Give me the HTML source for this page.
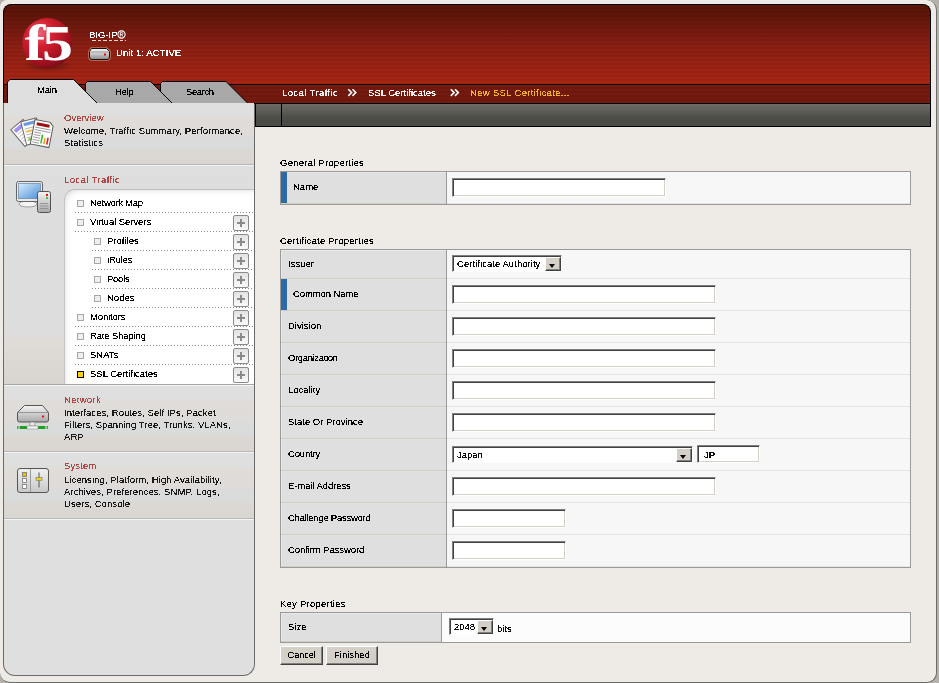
<!DOCTYPE html>
<html><head><meta charset="utf-8">
<style>
*{margin:0;padding:0;box-sizing:border-box}
html,body{width:939px;height:683px;overflow:hidden;background:#b4b0aa}
body{font-family:"Liberation Sans",sans-serif;font-size:9.5px;color:#111;position:relative}
.a{position:absolute}
.t{position:absolute;white-space:nowrap;line-height:12px;font-size:9.5px}
#frame{left:0;top:0;width:937px;height:683px;background:#eeebe6;border-right:1px solid #6a6a6a;border-bottom:1px solid #6a6a6a;border-radius:7px 10px 10px 10px}
#hdr{left:3px;top:4px;width:928px;height:81px;border:1px solid #000;border-bottom:none;border-radius:8px 8px 0 0;
 background:repeating-linear-gradient(to bottom,rgba(0,0,0,0) 0,rgba(0,0,0,0) 2px,rgba(0,0,0,.07) 2px,rgba(0,0,0,.07) 4px),linear-gradient(to bottom,#5e1609 1.2%,#5c1409 7.4%,#6a180d 19.8%,#761b10 32.1%,#851d12 44.4%,#8e2013 54.3%,#922013 63.0%,#9c2214 75.3%,#a42414 87.7%,#a82515 98.8%)}
#band{left:3px;top:84px;width:928px;height:20px;background:repeating-linear-gradient(to bottom,rgba(0,0,0,0) 0,rgba(0,0,0,0) 2px,rgba(0,0,0,.08) 2px,rgba(0,0,0,.08) 4px),#761a10;border-top:1px solid #000;border-bottom:1px solid #000;border-left:1px solid #000;border-right:1px solid #000}
#gbar{left:255px;top:103px;width:676px;height:24px;background:linear-gradient(to bottom,#6c6b65 0%,#5e5d57 30%,#50504a 55%,#4a4b45 75%,#4a4b45 100%);border:1px solid #000}
#gdiv{left:281px;top:104px;width:1px;height:22px;background:#000}
#side{left:3px;top:103px;width:252px;height:573px;background:#dfdfdf;border:1px solid #6a6a6a;border-top:none;border-radius:0 0 12px 12px;overflow:hidden}

.sec{position:absolute;left:4px;width:250px}
.hl{position:absolute;left:4px;width:250px;height:1px}
.ttl{position:absolute;white-space:nowrap;line-height:12px;font-size:9.5px;color:#b04848;left:64px}
.dsc{position:absolute;white-space:nowrap;line-height:12px;font-size:9.5px;color:#1a1a1a;left:64px}
.cb{position:absolute;width:7px;height:7px;border:1px solid #a8a8a8;background:#efefef}
.dl{position:absolute;height:1px;background:repeating-linear-gradient(to right,#8a8a8a 0,#8a8a8a 1px,transparent 1px,transparent 3px)}
.pl{position:absolute;left:233px;width:16px;height:16px;border:1px solid #8a8a8a;border-radius:2px;background:linear-gradient(#e2e2e2,#fafafa)}
.pl:before{content:"";position:absolute;left:3px;top:6px;width:8px;height:2px;background:#8a8a8a}
.pl:after{content:"";position:absolute;left:6px;top:3px;width:2px;height:8px;background:#8a8a8a}
.nv{position:absolute;white-space:nowrap;line-height:12px;font-size:9.5px;color:#000}

.tb{position:absolute;left:280px;width:631px;border:1px solid #9a9a9a;background:#f7f7f7}
.lc{position:absolute;left:281px;width:165px;background:#dfdfdf;box-shadow:inset 1px 1px 0 #e9e9e9}
.vs{position:absolute;left:446px;width:1px;background:#9a9a9a}
.rs{position:absolute;left:281px;width:629px;height:1px;background:linear-gradient(to right,#d2cec6 0,#d2cec6 165px,#8c8c8c 165px,#8c8c8c 166px,#e4e4e4 166px)}
.lb{position:absolute;white-space:nowrap;line-height:12px;font-size:9.5px;color:#000;left:288px}
.inp{position:absolute;left:452px;height:19px;background:#fff;border-top:1px solid #808080;border-left:1px solid #808080;border-bottom:1px solid #fff;border-right:1px solid #fff;box-shadow:inset 1px 1px 0 #404040,inset -1px -1px 0 #d4d0c8}
.sel{position:absolute;background:#fff;border-top:1px solid #808080;border-left:1px solid #808080;border-bottom:1px solid #fff;border-right:1px solid #fff;box-shadow:inset 1px 1px 0 #404040}
.arr{position:absolute;bottom:0;right:0;width:16px;height:14px;background:#d4d0c8;border-top:1px solid #fff;border-left:1px solid #fff;border-right:1px solid #404040;border-bottom:1px solid #404040;box-shadow:inset -1px -1px 0 #808080}
.arr:after{content:"";position:absolute;left:3px;top:6px;border-left:3.5px solid transparent;border-right:3.5px solid transparent;border-top:4px solid #000}
.bt{position:absolute;top:646px;height:19px;background:#d4d0c8;border-top:1px solid #fff;border-left:1px solid #fff;border-right:1px solid #404040;border-bottom:1px solid #404040;box-shadow:inset -1px -1px 0 #808080;font-size:9.5px;line-height:16px;text-align:center;color:#000}
.hd{position:absolute;left:280px;white-space:nowrap;line-height:12px;font-size:9.5px;color:#000}
.bb{position:absolute;left:281px;width:6px;background:#2e6aa4}
.t,.ttl,.dsc,.nv,.lb,.hd,.bt span{filter:url(#th)}
.bt span{display:block}
</style></head><body>
<svg width="0" height="0" style="position:absolute"><filter id="th" x="-5%" y="-20%" width="110%" height="140%"><feComponentTransfer><feFuncA type="discrete" tableValues="0 0 1 1 1"/></feComponentTransfer></filter></svg>
<div class="a" id="frame"></div>
<div class="a" id="hdr"></div>
<div class="a" id="band"></div>
<div class="a" id="gbar"></div>
<div class="a" id="gdiv"></div>
<div class="a" id="side"></div>

<svg class="a" style="left:0;top:0" width="260" height="110">
 <defs>
  <radialGradient id="lg" cx="0.35" cy="0.3" r="0.75">
   <stop offset="0" stop-color="#e86878"/>
   <stop offset="0.35" stop-color="#d42030"/>
   <stop offset="0.8" stop-color="#a01020"/>
   <stop offset="1" stop-color="#7a0c18"/>
  </radialGradient>
  <radialGradient id="sh" cx="0.5" cy="0.5" r="0.5">
   <stop offset="0" stop-color="#000" stop-opacity=".35"/>
   <stop offset="1" stop-color="#000" stop-opacity="0"/>
  </radialGradient>
 </defs>
 <ellipse cx="48" cy="66" rx="26" ry="6" fill="url(#sh)"/>
 <circle cx="47.3" cy="43" r="25" fill="url(#lg)"/>
 <text x="24.5" y="60" font-family="Liberation Serif" font-weight="bold" font-size="50" fill="#fff" letter-spacing="-2.5" transform="translate(24.5 60) scale(1.24 1) translate(-24.5 -60)">f5</text>
 <!-- tabs -->
 <path d="M160.5,103 L160.5,83.5 L162.5,81.5 L226,81.5 L247.5,103" fill="#a8a8a8" stroke="#000" stroke-width="1"/>
 <path d="M85.5,103 L85.5,83.5 L87.5,81.5 L150.5,81.5 L172,103" fill="#a8a8a8" stroke="#000" stroke-width="1"/>
 <path d="M7.5,104 L7.5,82 L10,79.5 L73.5,79.5 L97.5,103.5 L97.5,104 Z" fill="#dedede" stroke="none"/>
 <path d="M7.5,104 L7.5,82 L10,79.5 L73.5,79.5 L97.5,103.5" fill="none" stroke="#000" stroke-width="1"/>
</svg>
<div class="a" style="left:4px;top:103px;width:94px;height:2px;background:#dfdfdf"></div><div class="a" style="left:97px;top:103px;width:158px;height:1px;background:#000"></div><div class="a" style="left:97px;top:104px;width:157px;height:1px;background:#dfdfdf"></div>
<div class="sec" style="top:103px;height:61px;background:linear-gradient(#dfdfdf 0%,#dfdfdf 18%,#e0dcd8 24%,#dfdbd8 52%,#dadbdb 60%,#dadbdb 72%,#dbd7d2 80%,#d9d6d1 100%)"></div>
<div class="hl" style="top:164px;background:#b8b8b8"></div>
<div class="hl" style="top:165px;background:#f4f4f4"></div>
<div class="sec" style="top:166px;height:218px;background:linear-gradient(#dedede 0%,#dddddd 77%,#dfdbd7 80%,#d8d5d0 100%)"></div>
<div class="hl" style="top:384px;background:#a8a8a8"></div>
<div class="hl" style="top:385px;background:#f4f4f4"></div>
<div class="sec" style="top:386px;height:65px;background:linear-gradient(#dfdfdf 0%,#dfdfdf 18%,#e0dcd8 24%,#dfdbd8 52%,#dadbdb 60%,#dadbdb 72%,#dbd7d2 80%,#d9d6d1 100%)"></div>
<div class="hl" style="top:451px;background:#b8b8b8"></div>
<div class="hl" style="top:452px;background:#f4f4f4"></div>
<div class="sec" style="top:453px;height:65px;background:linear-gradient(#dfdfdf 0%,#dfdfdf 18%,#e0dcd8 24%,#dfdbd8 52%,#dadbdb 60%,#dadbdb 72%,#dbd7d2 80%,#d9d6d1 100%)"></div>
<div class="hl" style="top:518px;background:#b8b8b8"></div>
<div class="hl" style="top:519px;background:#f4f4f4"></div>

<svg class="a" style="left:0;top:100px" width="64" height="400">
 <defs>
  <linearGradient id="gbox" x1="0" y1="0" x2="0" y2="1"><stop offset="0" stop-color="#f4f4f4"/><stop offset="1" stop-color="#a8a8a8"/></linearGradient>
  <linearGradient id="gscr" x1="0" y1="0" x2="1" y2="1"><stop offset="0" stop-color="#d8ecfc"/><stop offset="1" stop-color="#4a90d8"/></linearGradient>
  <linearGradient id="gsys" x1="0" y1="0" x2="0" y2="1"><stop offset="0" stop-color="#f0f0f0"/><stop offset="1" stop-color="#c8c8c8"/></linearGradient>
 </defs>
 <!-- overview: papers -->
 <g transform="translate(24,33) rotate(-40)"><rect x="-8" y="-11" width="16" height="22" fill="#fff" stroke="#6a6a6a"/><rect x="-6" y="-9" width="12" height="4" fill="#a090f0"/><path d="M-6 -3h12M-6 0h12M-6 3h12M-6 6h9" stroke="#aaa" stroke-width=".8"/></g>
 <g transform="translate(31.5,31.5) rotate(-14)"><rect x="-8" y="-12" width="16" height="24" fill="#fff" stroke="#6a6a6a"/><rect x="-6" y="-10" width="12" height="3" fill="#6a9ae0"/><path d="M-6 -4h12M-6 -1h12M-6 2h12M-6 5h12M-6 8h10" stroke="#aaa" stroke-width=".8"/><rect x="-5" y="-2" width="6" height="2" fill="#f0c040"/><rect x="-5" y="6" width="4" height="2" fill="#80d040"/></g>
 <g transform="translate(42,33.5) rotate(11)"><path d="M-9.5 -12.5 L6 -12.5 L9.5 -9 L9.5 12.5 L-9.5 12.5 Z" fill="#fff" stroke="#5a5a5a"/><rect x="-7" y="-10" width="13" height="3" fill="#a01010"/><path d="M-8 -5h16M-8 -2.5h16M-8 0h7M-8 2.5h7M-8 5h7M-8 7.5h7M-8 10h7" stroke="#777" stroke-width=".7"/><rect x="0" y="1" width="1.6" height="9" fill="#30c030"/><rect x="3" y="4" width="1.6" height="6" fill="#f0a020"/><rect x="6" y="3" width="1.6" height="7" fill="#e02020"/></g>
 <!-- monitor (abs y 181-213 -> 81-113) -->
 <ellipse cx="28" cy="104" rx="9" ry="3" fill="#f4f4f4" stroke="#888" stroke-width=".8"/>
 <rect x="16.5" y="81.5" width="26" height="20" rx="2" fill="#e8e8e8" stroke="#666"/>
 <rect x="18.5" y="83.5" width="22" height="15" fill="url(#gscr)" stroke="#5a7898" stroke-width=".6"/>
 <rect x="37.5" y="91.5" width="13" height="21" rx="2" fill="url(#gbox)" stroke="#555"/>
 <rect x="46" y="94" width="2" height="2" fill="#f00"/>
 <rect x="46" y="97" width="2" height="2" fill="#3c3"/>
 <path d="M40 103.5h8M40 106h8M40 108.5h8" stroke="#8a8a8a" stroke-width=".8"/>
 <!-- network (abs 405-429 -> 305-329) -->
 <path d="M24.5 305.5 L42.5 305.5 L48.5 312.5 L48.5 320 Q48.5 322 46.5 322 L19.5 322 Q17.5 322 17.5 320 L17.5 312.5 Z" fill="url(#gbox)" stroke="#555"/>
 <path d="M17.5 312.5 L48.5 312.5" stroke="#888" stroke-width=".8"/>
 <rect x="42" y="315.5" width="2" height="2" fill="#f00"/>
 <rect x="30" y="322" width="5" height="4" fill="#e8e8e8" stroke="#777" stroke-width=".6"/>
 <rect x="20" y="326" width="7" height="3" fill="#20a020"/><rect x="38" y="326" width="7" height="3" fill="#20a020"/>
 <rect x="27" y="326" width="11" height="3" fill="#f0f0f0" stroke="#888" stroke-width=".5"/>
 <path d="M17.5 326v3M19 326v3M46 326v3M47.5 326v3" stroke="#20a020" stroke-width=".8"/>
 <!-- system (abs 468-493 -> 368-393) -->
 <rect x="17.5" y="368.5" width="31" height="24" rx="2.5" fill="url(#gsys)" stroke="#555"/>
 <path d="M30.5 369v23" stroke="#999"/>
 <rect x="22.5" y="372.5" width="4" height="4" fill="#f0c000" stroke="#777" stroke-width=".8"/>
 <rect x="22.5" y="378.5" width="4" height="4" fill="#fff" stroke="#777" stroke-width=".8"/>
 <rect x="22.5" y="384.5" width="4" height="4" fill="#fff" stroke="#777" stroke-width=".8"/>
 <path d="M39 372.5v15" stroke="#555" stroke-width="1"/>
 <rect x="36" y="377.5" width="6" height="3" fill="#f0d020" stroke="#777" stroke-width=".6"/>
</svg>
<div class="ttl" style="top:112px">Overview</div>
<div class="dsc" style="top:125px;letter-spacing:0.1px">Welcome, Traffic Summary, Performance,<br>Statistics</div>
<div class="ttl" style="top:174px;letter-spacing:0.4px">Local Traffic</div>
<div class="ttl" style="top:394px;letter-spacing:0.3px">Network</div>
<div class="dsc" style="top:407px;letter-spacing:0.06px">Interfaces, Routes, Self IPs, Packet<br>Filters, Spanning Tree, Trunks, VLANs,<br>ARP</div>
<div class="ttl" style="top:460px;letter-spacing:0.1px">System</div>
<div class="dsc" style="top:474px;letter-spacing:0.08px">Licensing, Platform, High Availability,<br>Archives, Preferences, SNMP, Logs,<br>Users, Console</div>
<div class="a" style="left:64px;top:189px;width:190px;height:195px;background:#fff;border-top:1px solid #bdbdbd;border-left:1px solid #c4c4c4;border-top-left-radius:11px;box-shadow:inset 4px 4px 5px -3px #e4e4e4"></div>
<div class="cb" style="left:77px;top:200px"></div>
<div class="nv" style="left:90px;top:197px;letter-spacing:-0.3px">Network Map</div>
<div class="dl" style="left:75px;top:212px;width:179px"></div>
<div class="cb" style="left:77px;top:219px"></div>
<div class="nv" style="left:90px;top:216px;letter-spacing:-0.07px">Virtual Servers</div>
<div class="pl" style="top:215px"></div>
<div class="dl" style="left:75px;top:231px;width:179px"></div>
<div class="cb" style="left:94px;top:238px"></div>
<div class="nv" style="left:107px;top:235px">Profiles</div>
<div class="pl" style="top:234px"></div>
<div class="dl" style="left:92px;top:250px;width:162px"></div>
<div class="cb" style="left:94px;top:257px"></div>
<div class="nv" style="left:107px;top:254px;letter-spacing:-0.2px">iRules</div>
<div class="pl" style="top:253px"></div>
<div class="dl" style="left:92px;top:269px;width:162px"></div>
<div class="cb" style="left:94px;top:276px"></div>
<div class="nv" style="left:107px;top:273px;letter-spacing:-0.25px">Pools</div>
<div class="pl" style="top:272px"></div>
<div class="dl" style="left:92px;top:288px;width:162px"></div>
<div class="cb" style="left:94px;top:295px"></div>
<div class="nv" style="left:107px;top:292px">Nodes</div>
<div class="pl" style="top:291px"></div>
<div class="dl" style="left:92px;top:307px;width:162px"></div>
<div class="cb" style="left:77px;top:314px"></div>
<div class="nv" style="left:90px;top:311px;letter-spacing:-0.14px">Monitors</div>
<div class="pl" style="top:310px"></div>
<div class="dl" style="left:75px;top:326px;width:179px"></div>
<div class="cb" style="left:77px;top:333px"></div>
<div class="nv" style="left:90px;top:330px;letter-spacing:-0.15px">Rate Shaping</div>
<div class="pl" style="top:329px"></div>
<div class="dl" style="left:75px;top:345px;width:179px"></div>
<div class="cb" style="left:77px;top:352px"></div>
<div class="nv" style="left:90px;top:349px">SNATs</div>
<div class="pl" style="top:348px"></div>
<div class="dl" style="left:75px;top:364px;width:179px"></div>
<div class="cb" style="left:77px;top:371px;border-color:#000;background:#ffd200"></div>
<div class="nv" style="left:90px;top:368px">SSL Certificates</div>
<div class="pl" style="top:367px"></div>

<div class="t" style="left:89px;top:29px;color:#fff">BIG-IP</div><svg class="a" style="left:115px;top:29px" width="14" height="12"><circle cx="6.5" cy="5.5" r="3.6" fill="none" stroke="#fff" stroke-width="1.1"/><path d="M5.3 7.6V3.6h1.4q1.1 0 1.1 1t-1.1 1H5.3M6.7 5.6l1.2 2" fill="none" stroke="#fff" stroke-width=".9"/></svg>
<div class="a" style="left:92px;top:40px;width:34px;height:1px;background:repeating-linear-gradient(to right,#e8d8d0 0,#e8d8d0 3.5px,transparent 3.5px,transparent 5.5px)"></div>
<svg class="a" style="left:84px;top:44px" width="30" height="20"><defs><linearGradient id="srv" x1="0" y1="0" x2="0" y2="1"><stop offset="0" stop-color="#f4f4f4"/><stop offset=".35" stop-color="#d8d8d8"/><stop offset="1" stop-color="#8a8a8a"/></linearGradient></defs>
<path d="M7.5 4.5 L22.5 4.5 L25.5 7.5 L25.5 13 Q25.5 15.5 23 15.5 L8 15.5 Q5.5 15.5 5.5 13 L5.5 7.5 Z" fill="none" stroke="#f0c8a0" stroke-width="2.5" opacity=".55"/>
<path d="M7.5 4.5 L22.5 4.5 L25.5 7.5 L25.5 13 Q25.5 15.5 23 15.5 L8 15.5 Q5.5 15.5 5.5 13 L5.5 7.5 Z" fill="url(#srv)" stroke="#151010"/>
<path d="M6 8h19" stroke="#777" stroke-width=".6"/>
<rect x="20" y="9.5" width="2" height="2" fill="#f00"/></svg>
<div class="t" style="left:116px;top:47px;color:#fff;letter-spacing:0.1px">Unit 1: ACTIVE</div>
<div class="t" style="left:37px;top:84px;color:#000;letter-spacing:-0.17px">Main</div>
<div class="t" style="left:115px;top:86px;color:#000;letter-spacing:-0.33px">Help</div>
<div class="t" style="left:186px;top:86px;color:#000;letter-spacing:-0.4px">Search</div>
<div class="t" style="left:282px;top:87px;color:#f6f0ee;letter-spacing:0.4px">Local Traffic</div>
<svg class="a" style="left:0;top:0" width="939" height="110"><path d="M348.3 89.3 L351.6 92.6 L348.3 95.9 M352.5 89.3 L355.8 92.6 L352.5 95.9 M450.8 89.3 L454.1 92.6 L450.8 95.9 M455 89.3 L458.3 92.6 L455 95.9" fill="none" stroke="#fff" stroke-width="1.6"/></svg>
<div class="t" style="left:368px;top:87px;color:#f6f0ee">SSL Certificates</div>

<div class="t" style="left:470px;top:87px;color:#f0b428;letter-spacing:0.32px">New SSL Certificate...</div>
<div class="hd" style="top:157px;letter-spacing:0.24px">General Properties</div>
<div class="tb" style="top:171px;height:34px"></div>
<div class="lc" style="top:172px;height:31px"></div>
<div class="rs" style="top:203px"></div>
<div class="vs" style="top:172px;height:32px"></div>
<div class="bb" style="top:172px;height:31px"></div>
<div class="lb" style="left:293px;top:181px">Name</div>
<div class="inp" style="top:178px;width:214px"></div>

<div class="hd" style="top:235px;letter-spacing:0.24px">Certificate Properties</div>
<div class="tb" style="top:249px;height:319px"></div>
<div class="lc" style="top:250px;height:316px"></div>
<div class="vs" style="top:250px;height:317px"></div>
<div class="bb" style="top:279px;height:31px"></div>
<div class="lb" style="top:258px">Issuer</div>
<div class="sel" style="left:452px;top:255px;width:110px;height:17px"><div class="arr"></div></div>
<div class="t" style="left:457px;top:258px;letter-spacing:0.05px">Certificate Authority</div>
<div class="rs" style="top:278px"></div>
<div class="lb" style="left:293px;top:288px;letter-spacing:-0.1px">Common Name</div>
<div class="inp" style="top:285px;width:264px"></div>
<div class="rs" style="top:310px"></div>
<div class="lb" style="left:288px;top:320px">Division</div>
<div class="inp" style="top:317px;width:264px"></div>
<div class="rs" style="top:342px"></div>
<div class="lb" style="left:288px;top:352px;letter-spacing:-0.36px">Organization</div>
<div class="inp" style="top:349px;width:264px"></div>
<div class="rs" style="top:374px"></div>
<div class="lb" style="left:288px;top:384px">Locality</div>
<div class="inp" style="top:381px;width:264px"></div>
<div class="rs" style="top:406px"></div>
<div class="lb" style="left:288px;top:416px">State Or Province</div>
<div class="inp" style="top:413px;width:264px"></div>
<div class="rs" style="top:438px"></div>
<div class="lb" style="left:288px;top:448px;letter-spacing:-0.17px">Country</div>
<div class="sel" style="left:452px;top:446px;width:241px;height:17px"><div class="arr"></div></div>
<div class="t" style="left:457px;top:449px">Japan</div>
<div class="inp" style="left:697px;top:445px;width:63px;height:18px"></div>
<div class="t" style="left:704px;top:449px">JP</div>
<div class="rs" style="top:470px"></div>
<div class="lb" style="left:288px;top:480px;letter-spacing:-0.08px">E-mail Address</div>
<div class="inp" style="top:477px;width:264px"></div>
<div class="rs" style="top:502px"></div>
<div class="lb" style="left:288px;top:512px;letter-spacing:-0.26px">Challenge Password</div>
<div class="inp" style="top:509px;width:114px"></div>
<div class="rs" style="top:534px"></div>
<div class="lb" style="left:288px;top:544px;letter-spacing:-0.09px">Confirm Password</div>
<div class="inp" style="top:541px;width:114px"></div>
<div class="rs" style="top:566px"></div>

<div class="hd" style="top:598px;letter-spacing:0.24px">Key Properties</div>
<div class="tb" style="top:612px;height:31px;background:#fcfcfc"></div>
<div class="lc" style="top:613px;height:28px;width:160px"></div>
<div class="a" style="left:281px;top:641px;width:160px;height:1px;background:#d2cec6"></div>
<div class="vs" style="left:441px;top:613px;height:29px"></div>
<div class="lb" style="top:621px">Size</div>
<div class="sel" style="left:449px;top:618px;width:45px;height:17px"><div class="arr"></div></div>
<div class="t" style="left:454px;top:621px">2048</div>
<div class="t" style="left:497px;top:623px">bits</div>
<div class="bt" style="left:280px;width:43px;letter-spacing:-0.3px"><span>Cancel</span></div>
<div class="bt" style="left:326px;width:52px"><span>Finished</span></div>
</body></html>
